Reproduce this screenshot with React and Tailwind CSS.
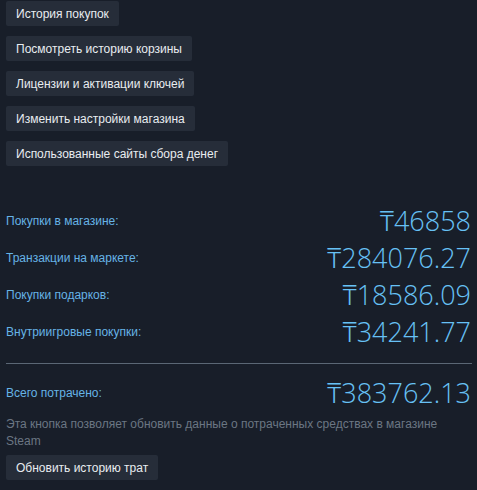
import React from "react";

const btn =
  "self-start h-[25px] px-[10px] flex items-center bg-[#262d39] text-[#e8ecf0] text-[12px] rounded-[2px]";

const rows = [
  ["Покупки в магазине:", "₸46858"],
  ["Транзакции на маркете:", "₸284076.27"],
  ["Покупки подарков:", "₸18586.09"],
  ["Внутриигровые покупки:", "₸34241.77"],
];

const valFont = { fontFamily: '"Open Sans", "Noto Sans", sans-serif' };

export default function App() {
  return (
    <div
      className="w-[477px] h-[490px] bg-[#181e29] overflow-hidden flex flex-col pl-[6px] pr-[5px] pt-[1px]"
      style={{ fontFamily: '"Liberation Sans", Arial, sans-serif' }}
    >
      <div className="flex flex-col gap-[10px]">
        <div className={btn}>История покупок</div>
        <div className={btn}>Посмотреть историю корзины</div>
        <div className={btn}>Лицензии и активации ключей</div>
        <div className={btn}>Изменить настройки магазина</div>
        <div className={btn}>Использованные сайты сбора денег</div>
      </div>
      <div className="flex flex-col mt-[37px] gap-[2px]">
        {rows.map(([l, v]) => (
          <div key={l} className="flex items-center justify-between h-[35px] pr-[1px]">
            <span className="text-[12px] text-[#66b3e6]">{l}</span>
            <span className="text-[27px] font-light text-[#67c1f5] leading-none" style={valFont}>
              {v}
            </span>
          </div>
        ))}
      </div>
      <div className="h-px bg-[#5b6775] mt-[14px]"></div>
      <div className="flex items-center justify-between h-[35px] mt-[11px] pr-[1px]">
        <span className="text-[12px] text-[#66b3e6]">Всего потрачено:</span>
        <span className="text-[27px] font-light text-[#67c1f5] leading-none" style={valFont}>
          ₸383762.13
        </span>
      </div>
      <div className="text-[12px] text-[#6b7683] leading-[17px] mt-[6px] pr-[20px]">
        Эта кнопка позволяет обновить данные о потраченных средствах в магазине Steam
      </div>
      <div className={btn + " mt-[5px]"}>Обновить историю трат</div>
    </div>
  );
}
